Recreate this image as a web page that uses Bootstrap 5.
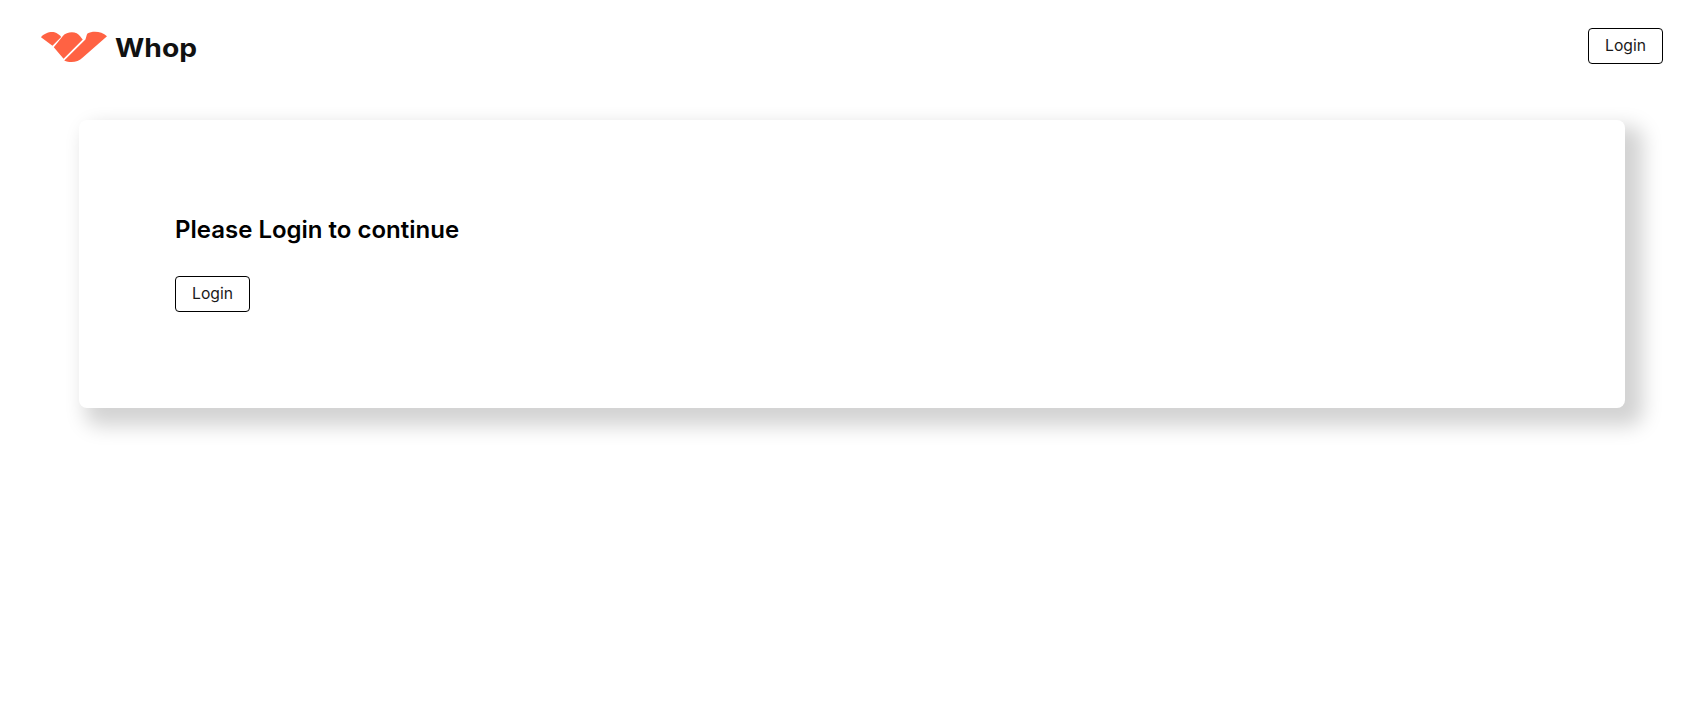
<!DOCTYPE html>
<html lang="en">
<head>
    <meta charset="UTF-8">
    <meta name="viewport" content="width=device-width, initial-scale=1.0">
    <title>Whop</title>
    <link href="https://cdn.jsdelivr.net/npm/bootstrap@5.3.0/dist/css/bootstrap.min.css" rel="stylesheet">
    <style>
        body { font-family: "Inter", "Liberation Sans", sans-serif; color: #000; background: #fff; }
        .top-bar { padding: 28px 32px 0 41px; height: 120px; align-items: flex-start !important; }
        .brand-link { padding-top: 2px; }
        .brand-name { display: inline-block; width: 82px; margin-top: 2px; font-weight: 700; font-size: 25px; line-height: 32px; color: #111; transform: scaleX(1.13); transform-origin: left center; }
        .login-btn { width: 75px; height: 36px; padding: 0; font-size: 15.7px; line-height: 34px; color: #1a1a1a; background: #fff; border: 1px solid #000; border-radius: 4px; }
        .login-panel { margin: 0 70px 0 79px; height: 288px; padding: 96px; background: #fff; border-radius: 8px; box-shadow: 12px 12px 20px 6px rgba(0,0,0,.175); }
        .login-panel h1 { font-size: 24px; font-weight: 600; line-height: 27px; margin-bottom: 33px; color: #000; }
    </style>
</head>
<body class="min-vh-100">
<nav class="d-flex justify-content-between top-bar">
    <a href="#" class="d-flex align-items-center gap-2 text-decoration-none brand-link">
        <svg width="66" height="32" viewBox="12 12 196 94" aria-hidden="true">
            <path fill="#ff6243" d="M12 30C20 18 40 12 52 15C60 17 68 24 72 29L46 55Z"/>
            <path fill="#ff6243" d="M77 26C86 15 106 12 118 18C127 24 132 32 136 37L79 94L50 60Z"/>
            <path fill="#ff6243" d="M81 99C100 108 122 104 136 90L208 27C192 12 165 11 150 19C147 24 146 31 144 37Z"/>
        </svg>
        <span class="brand-name">Whop</span>
    </a>
    <button type="button" class="btn login-btn">Login</button>
</nav>
<main class="login-panel">
    <h1>Please Login to continue</h1>
    <button type="button" class="btn login-btn">Login</button>
</main>
<script src="https://cdn.jsdelivr.net/npm/bootstrap@5.3.0/dist/js/bootstrap.bundle.min.js"></script>
</body>
</html>
